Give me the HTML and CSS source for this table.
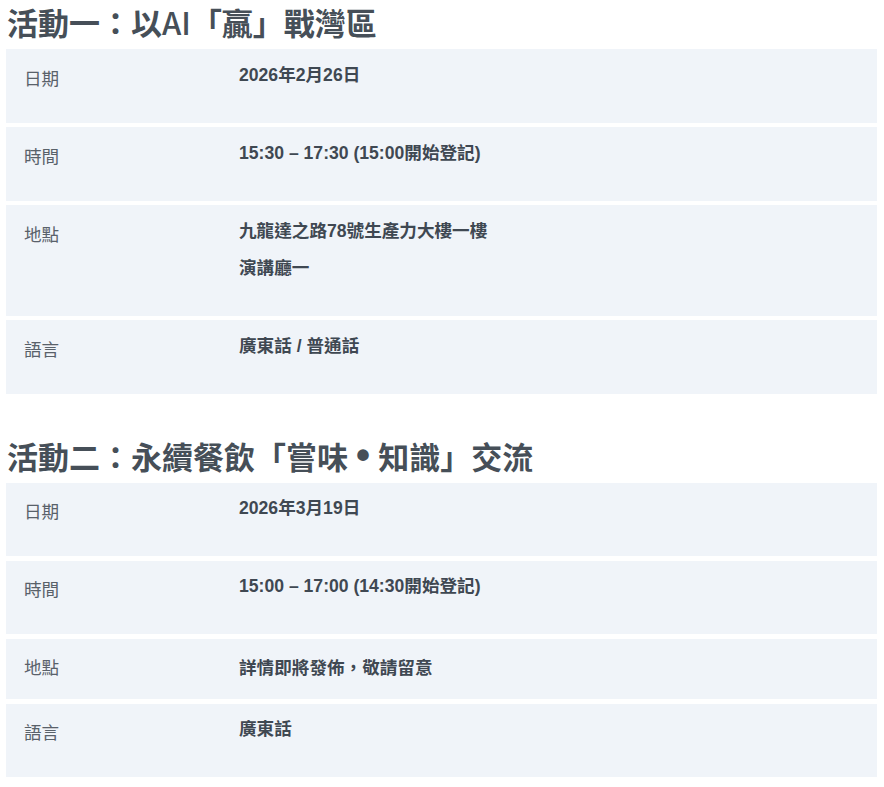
FILE: index.html
```html
<!DOCTYPE html>
<html lang="zh-Hant">
<head>
<meta charset="utf-8">
<title>活動詳情</title>
<link rel="stylesheet" href="styles.css">
</head>
<body>
<main class="page">
  <section class="event">
    <h2 class="event-title">活動一：以<span class="latin">AI</span>「贏」戰灣區</h2>
    <div class="info-row">
      <div class="info-label">日期</div>
      <div class="info-value"><p>2026年2月26日</p></div>
    </div>
    <div class="info-row">
      <div class="info-label">時間</div>
      <div class="info-value"><p>15:30 – 17:30 (15:00開始登記)</p></div>
    </div>
    <div class="info-row">
      <div class="info-label">地點</div>
      <div class="info-value"><p>九龍達之路78號生產力大樓一樓</p><p>演講廳一</p></div>
    </div>
    <div class="info-row">
      <div class="info-label">語言</div>
      <div class="info-value"><p>廣東話 / 普通話</p></div>
    </div>
  </section>

  <section class="event">
    <h2 class="event-title">活動二：永續餐飲「嘗味<span class="sep"> • </span>知識」交流</h2>
    <div class="info-row">
      <div class="info-label">日期</div>
      <div class="info-value"><p>2026年3月19日</p></div>
    </div>
    <div class="info-row">
      <div class="info-label">時間</div>
      <div class="info-value"><p>15:00 – 17:00 (14:30開始登記)</p></div>
    </div>
    <div class="info-row">
      <div class="info-label">地點</div>
      <div class="info-value">詳情即將發佈，敬請留意</div>
    </div>
    <div class="info-row">
      <div class="info-label">語言</div>
      <div class="info-value"><p>廣東話</p></div>
    </div>
  </section>
</main>
</body>
</html>
```

FILE: styles.css
```css
* {
  box-sizing: border-box;
}

html, body {
  margin: 0;
  padding: 0;
  background: #ffffff;
}

body {
  font-family: "Liberation Sans", "Noto Sans CJK TC", sans-serif;
  color: #3f4852;
}

.page {
  padding: 4px 7px 0 6px;
}

.event {
  margin-bottom: 44px;
}

.event-title {
  margin: 0 0 9px 1px;
  font-family: "Noto Sans CJK TC", sans-serif;
  font-size: 31px;
  line-height: 36px;
  font-weight: 700;
  color: #464f58;
}

.event-title .latin {
  font-weight: 500;
}

.event-title .sep {
  font-family: "Liberation Sans", sans-serif;
  font-size: 40px;
  line-height: 0;
  word-spacing: -3px;
}

.info-row {
  display: grid;
  grid-template-columns: 215px 1fr;
  align-items: start;
  background: #f0f4f9;
  padding: 17.5px 18px 19px 18px;
  margin-bottom: 4.5px;
}

.info-label {
  font-size: 17.6px;
  line-height: 24px;
  color: #59616a;
  font-weight: 400;
}

.info-value {
  font-size: 17.6px;
  line-height: 24px;
  font-weight: 700;
  color: #3f4852;
}

.info-value p {
  margin: -4px 0 17px 0;
}
```
